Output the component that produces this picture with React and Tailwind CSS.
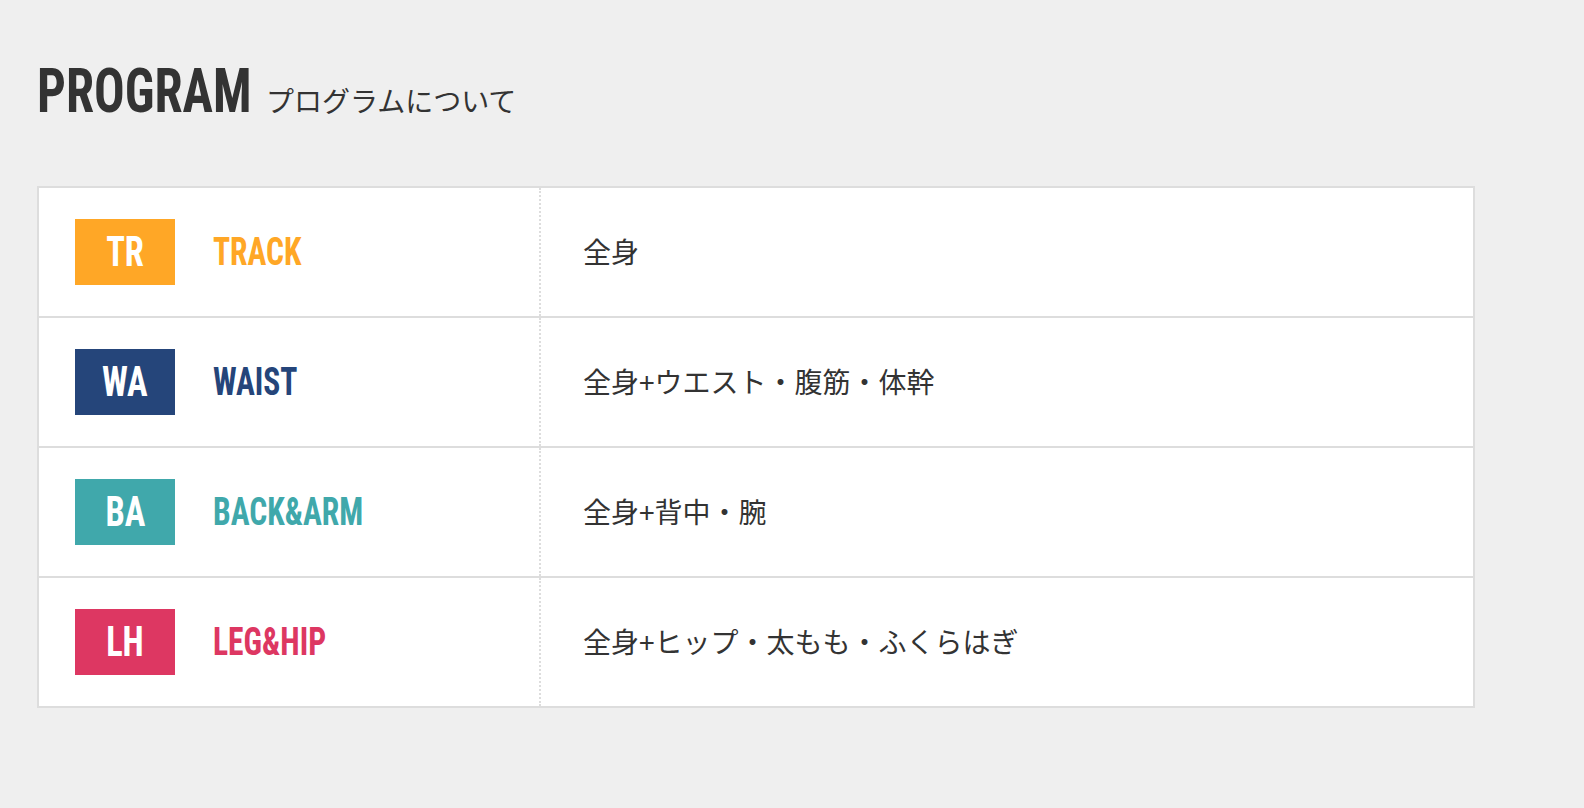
const programs = [
  { code: "TR", name: "TRACK", desc: "全身", badge: "bg-[#ffa726]", color: "text-[#ffa726]" },
  { code: "WA", name: "WAIST", desc: "全身+ウエスト・腹筋・体幹", badge: "bg-[#25457a]", color: "text-[#25457a]" },
  { code: "BA", name: "BACK&ARM", desc: "全身+背中・腕", badge: "bg-[#40a8ab]", color: "text-[#40a8ab]" },
  { code: "LH", name: "LEG&HIP", desc: "全身+ヒップ・太もも・ふくらはぎ", badge: "bg-[#dd3762]", color: "text-[#dd3762]" },
]

const cond = "font-['Roboto_Condensed','Roboto',sans-serif] font-bold"
const jp = "font-['Noto_Sans_CJK_JP','Noto_Sans',sans-serif]"

const ProgramRow = ({ p }) => {
  return (
    <div className="flex box-content h-[128px]">
      <div className="w-[500px] flex items-center pl-[36px]">
        <div className={"w-[100px] h-[66px] flex items-center justify-center overflow-hidden " + p.badge}>
          <span className={cond + " text-white text-[42px] leading-none scale-x-[0.82] whitespace-nowrap"}>{p.code}</span>
        </div>
        <div className="ml-[38px] w-[200px] whitespace-nowrap">
          <span className={cond + " inline-block origin-left scale-x-[0.83] text-[38px] leading-none " + p.color}>{p.name}</span>
        </div>
      </div>
      <div className="flex-1 flex items-center pl-[42px] border-l-2 border-dotted border-[#dddddd]">
        <p className={jp + " text-[28px] leading-none text-[#333333] -mt-[2px]"}>{p.desc}</p>
      </div>
    </div>
  )
}

export default function App() {
  return (
    <div className="min-h-screen bg-[#efefef] pl-[37px] pt-[60px] pb-[80px]">
      {/* heading */}
      <div className="flex items-baseline">
        <div className="w-[217px] whitespace-nowrap">
          <h2 className={cond + " inline-block origin-left scale-x-[0.82] text-[62px] leading-none text-[#333333]"}>PROGRAM</h2>
        </div>
        <p className={jp + " ml-[12px] text-[28px] leading-none text-[#333333]"}>プログラムについて</p>
      </div>

      {/* table */}
      <div className="mt-[64px] w-[1438px] bg-white border-2 border-[#dddddd] divide-y-2 divide-[#dddddd]">
        {programs.map((p) => (
          <ProgramRow key={p.code} p={p} />
        ))}
      </div>
    </div>
  )
}
